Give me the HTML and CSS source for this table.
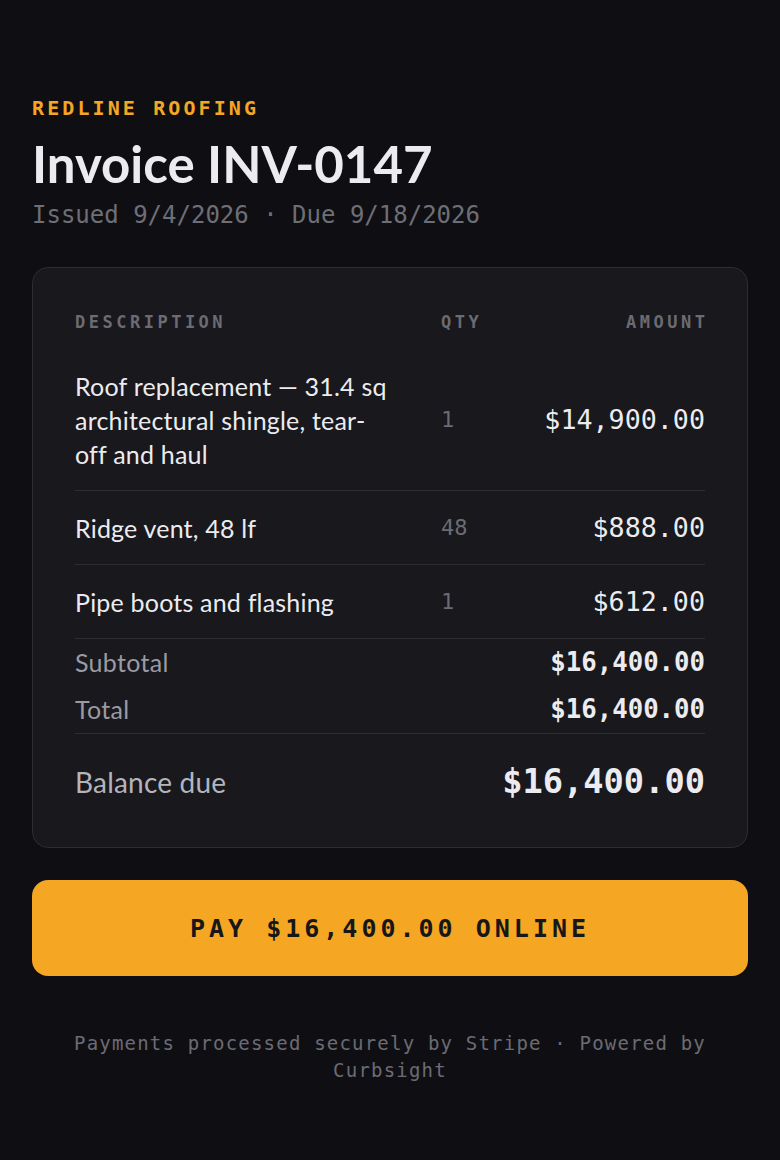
FILE: index.html
```html
<!DOCTYPE html>
<html lang="en">

<head>
    <meta charset="UTF-8">
    <meta name="viewport" content="width=device-width, initial-scale=1.0">
    <title>Invoice INV-0147</title>
    <link rel="stylesheet" href="styles.css">
</head>

<body>
    <div class="invoice-page">
        <div class="company">REDLINE ROOFING</div>
        <h1>Invoice INV-0147</h1>
        <div class="dates">Issued 9/4/2026 · Due 9/18/2026</div>

        <div class="card">
            <div class="line-head">
                <span>DESCRIPTION</span>
                <span>QTY</span>
                <span class="right">AMOUNT</span>
            </div>

            <div class="line-item">
                <span class="desc">Roof replacement — 31.4 sq architectural shingle, tear-off and haul</span>
                <span class="qty">1</span>
                <span class="amount">$14,900.00</span>
            </div>
            <div class="line-item">
                <span class="desc">Ridge vent, 48 lf</span>
                <span class="qty">48</span>
                <span class="amount">$888.00</span>
            </div>
            <div class="line-item">
                <span class="desc">Pipe boots and flashing</span>
                <span class="qty">1</span>
                <span class="amount">$612.00</span>
            </div>

            <div class="totals">
                <div class="total-row">
                    <span>Subtotal</span>
                    <span class="total-value">$16,400.00</span>
                </div>
                <div class="total-row">
                    <span>Total</span>
                    <span class="total-value">$16,400.00</span>
                </div>
            </div>

            <div class="balance">
                <span>Balance due</span>
                <span class="balance-value">$16,400.00</span>
            </div>
        </div>

        <button class="pay-button" type="button">PAY $16,400.00 ONLINE</button>

        <p class="footer">Payments processed securely by Stripe · Powered by Curbsight</p>
    </div>
</body>

</html>
```

FILE: styles.css
```css
body {
    margin: 0;
    padding: 0;
    background-color: #0f0f13;
    color: #ececf0;
    font-family: "Lato", "Noto Sans", sans-serif;
}

.invoice-page {
    padding: 94px 32px 40px;
}

.company {
    font-family: "DejaVu Sans Mono", monospace;
    font-size: 20px;
    font-weight: bold;
    letter-spacing: 3.1px;
    line-height: 28px;
    color: #f5a623;
}

h1 {
    margin: 12px 0 0;
    font-size: 51px;
    font-weight: 700;
    line-height: 60px;
    color: #ececf0;
}

.dates {
    margin-top: 5px;
    font-family: "DejaVu Sans Mono", monospace;
    font-size: 24px;
    line-height: 32px;
    color: #6e6e76;
}

.card {
    margin-top: 36px;
    background-color: #18181d;
    border: 1px solid #2c2c33;
    border-radius: 16px;
    padding: 40px 42px 41px;
}

.line-head,
.line-item {
    display: grid;
    grid-template-columns: 346px 80px 1fr;
    column-gap: 20px;
    align-items: center;
}

.line-head {
    font-family: "DejaVu Sans Mono", monospace;
    font-size: 17px;
    font-weight: bold;
    letter-spacing: 3.5px;
    line-height: 28px;
    color: #6b6b73;
    padding-bottom: 13px;
}

.right {
    text-align: right;
    margin-right: -3.5px;
}

.line-item {
    padding: 20px 0 19px;
    border-bottom: 1px solid #2c2c33;
    font-size: 25px;
    line-height: 34px;
}

.desc {
    max-width: 316px;
    letter-spacing: 0.2px;
    color: #ececf0;
}

.qty {
    font-family: "DejaVu Sans Mono", monospace;
    font-size: 22px;
    color: #6b6b73;
}

.amount {
    font-family: "DejaVu Sans Mono", monospace;
    font-size: 26.7px;
    text-align: right;
    color: #ececf0;
}

.totals {
    padding: 6px 0;
    border-bottom: 1px solid #2c2c33;
}

.total-row {
    display: flex;
    justify-content: space-between;
    align-items: center;
    font-size: 25px;
    letter-spacing: 0.3px;
    line-height: 35px;
    color: #9a9aa3;
    padding: 0 0 12px;
}

.total-row:last-child {
    padding-bottom: 0;
}

.total-value {
    font-family: "DejaVu Sans Mono", monospace;
    font-size: 25.7px;
    font-weight: bold;
    letter-spacing: 0;
    color: #ececf0;
}

.balance {
    display: flex;
    justify-content: space-between;
    align-items: center;
    padding-top: 24px;
    font-size: 28px;
    letter-spacing: 0.2px;
    line-height: 48px;
    color: #b4b4bc;
}

.balance-value {
    font-family: "DejaVu Sans Mono", monospace;
    font-size: 33.7px;
    font-weight: bold;
    letter-spacing: 0;
    color: #ececf0;
}

.pay-button {
    display: block;
    width: 100%;
    height: 96px;
    margin-top: 32px;
    background-color: #f5a623;
    border: none;
    border-radius: 16px;
    color: #17171a;
    font-family: "DejaVu Sans Mono", monospace;
    font-size: 25px;
    font-weight: bold;
    letter-spacing: 4px;
    cursor: pointer;
}

.footer {
    margin: 54px 0 0;
    text-align: center;
    font-family: "DejaVu Sans Mono", monospace;
    font-size: 19px;
    letter-spacing: 1.2px;
    line-height: 27px;
    color: #6b6b73;
}
```
